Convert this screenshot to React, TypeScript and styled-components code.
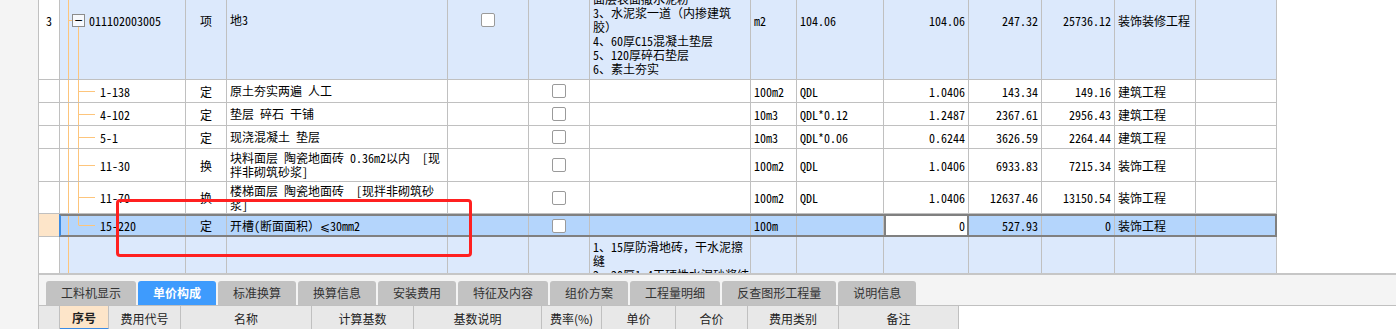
import React from "react";
import styled, { createGlobalStyle } from "styled-components";

const GlobalStyle = createGlobalStyle`
  body {
    margin: 0;
    background: #ffffff;
    font-family: "Noto Sans CJK SC", sans-serif;
  }
`;

const TREE = "#fdc57c";
const GRID_LINE = "#c0c0c0";
const CELL_FONT = `"Noto Sans Mono CJK SC", "Noto Sans CJK SC", "Liberation Mono", monospace`;

// widths of the grid columns after the row number column
const COLS = [126, 41, 221, 81, 61, 161, 46, 87, 85, 73, 73, 81, 81];

type RowKind = "item" | "child" | "selected";
type TreeKind = "item" | "child" | "last" | "plain";

interface RowData {
  height: number;
  kind: RowKind;
  tree: TreeKind;
  num?: string;
  code?: string;
  type?: string;
  name?: string[];
  check?: 5 | 6;
  desc?: string[];
  descTop?: boolean;
  unit?: string;
  expr?: string;
  qty?: string;
  price?: string;
  total?: string;
  major?: string;
}

const rows: RowData[] = [
  {
    height: 119,
    kind: "item",
    tree: "item",
    num: "3",
    code: "011102003005",
    type: "项",
    name: ["地3"],
    check: 5,
    desc: [
      "1、8-10厚地砖铺实拍平，",
      "2、20厚1:4干硬性水泥砂浆，",
      "面层表面撒水泥粉",
      "3、水泥浆一道（内掺建筑",
      "胶）",
      "4、60厚C15混凝土垫层",
      "5、120厚碎石垫层",
      "6、素土夯实",
    ],
    unit: "m2",
    expr: "104.06",
    qty: "104.06",
    price: "247.32",
    total: "25736.12",
    major: "装饰装修工程",
  },
  { height: 23, kind: "child", tree: "child", code: "1-138", type: "定", name: ["原土夯实两遍 人工"], check: 6, unit: "100m2", expr: "QDL", qty: "1.0406", price: "143.34", total: "149.16", major: "建筑工程" },
  { height: 23, kind: "child", tree: "child", code: "4-102", type: "定", name: ["垫层 碎石 干铺"], check: 6, unit: "10m3", expr: "QDL*0.12", qty: "1.2487", price: "2367.61", total: "2956.43", major: "建筑工程" },
  { height: 23, kind: "child", tree: "child", code: "5-1", type: "定", name: ["现浇混凝土 垫层"], check: 6, unit: "10m3", expr: "QDL*0.06", qty: "0.6244", price: "3626.59", total: "2264.44", major: "建筑工程" },
  { height: 33, kind: "child", tree: "child", code: "11-30", type: "换", name: ["块料面层 陶瓷地面砖 0.36m2以内  [现", "拌非砌筑砂浆]"], check: 6, unit: "100m2", expr: "QDL", qty: "1.0406", price: "6933.83", total: "7215.34", major: "装饰工程" },
  { height: 32, kind: "child", tree: "child", code: "11-70", type: "换", name: ["楼梯面层 陶瓷地面砖  [现拌非砌筑砂", "浆]"], check: 6, unit: "100m2", expr: "QDL", qty: "1.0406", price: "12637.46", total: "13150.54", major: "装饰工程" },
  { height: 23, kind: "selected", tree: "last", code: "15-220", type: "定", name: ["开槽(断面面积）⩽30mm2"], check: 6, unit: "100m", expr: "", qty: "0", price: "527.93", total: "0", major: "装饰工程" },
  {
    height: 130,
    kind: "item",
    tree: "plain",
    desc: ["1、15厚防滑地砖，干水泥擦", "缝", "2、20厚1:4干硬性水泥砂浆结"],
    descTop: true,
  },
];

const tabs = ["工料机显示", "单价构成", "标准换算", "换算信息", "安装费用", "特征及内容", "组价方案", "工程量明细", "反查图形工程量", "说明信息"];

const headCols: { label: string; w: number }[] = [
  { label: "序号", w: 49 },
  { label: "费用代号", w: 72 },
  { label: "名称", w: 131 },
  { label: "计算基数", w: 102 },
  { label: "基数说明", w: 128 },
  { label: "费率(%)", w: 60 },
  { label: "单价", w: 74 },
  { label: "合价", w: 72 },
  { label: "费用类别", w: 91 },
  { label: "备注", w: 120 },
];

const rowBg = (kind: RowKind) => (kind === "item" ? "#dce9fc" : kind === "selected" ? "#b4d5fc" : "#ffffff");

const line = (pos: string, size: string) => `linear-gradient(${TREE}, ${TREE}) ${pos} / ${size} no-repeat`;

const treeBg = (tree: TreeKind) => {
  const main = line("8px 0", "1px 100%");
  if (tree === "item") return [main, line("8px 50%", "4px 1px"), line("18px 100%", "1px calc(50% - 6px)")].join(", ");
  if (tree === "child") return [main, line("18px 0", "1px 100%"), line("19px 50%", "16px 1px")].join(", ");
  if (tree === "last") return [main, line("18px 0", "1px 50%"), line("19px 50%", "16px 1px")].join(", ");
  return main;
};

function Checkbox() {
  return <StCheck />;
}

function GridRow({ row }: { row: RowData }) {
  const cells: React.ReactNode[] = [
    <StCode key="code" $tree={row.tree} $pad={row.tree === "item" ? 12 : 40}>
      {row.tree === "item" && <StToggle>−</StToggle>}
      {row.code}
    </StCode>,
    <StCell key="type" $align="center">{row.type}</StCell>,
    <StCell key="name">
      <StLines>
        {row.name?.map((n) => (
          <StLine key={n}>{n}</StLine>
        ))}
      </StLines>
    </StCell>,
    <StCell key="c5" $align="center">{row.check === 5 && <Checkbox />}</StCell>,
    <StCell key="c6" $align="center">{row.check === 6 && <Checkbox />}</StCell>,
    <StCell key="desc" $top={row.descTop}>
      <StLines>
        {row.desc?.map((d) => (
          <StLine key={d}>{d}</StLine>
        ))}
      </StLines>
    </StCell>,
    <StCell key="unit">{row.unit}</StCell>,
    <StCell key="expr">{row.expr}</StCell>,
    row.kind === "selected" ? (
      <StEditCell key="qty">{row.qty}</StEditCell>
    ) : (
      <StCell key="qty" $align="right">{row.qty}</StCell>
    ),
    <StCell key="price" $align="right">{row.price}</StCell>,
    <StCell key="total" $align="right">{row.total}</StCell>,
    <StCell key="major">{row.major}</StCell>,
    <StCell key="remark" />,
  ];
  return (
    <StRow $h={row.height}>
      <StNumCell $selected={row.kind === "selected"}>{row.num}</StNumCell>
      <StRowBody $kind={row.kind}>{cells}</StRowBody>
    </StRow>
  );
}

export default function App() {
  return (
    <>
      <GlobalStyle />
      <StPage>
        <StSidebar />
        <StMain>
          <StGridArea>
            <StGrid>
              {rows.map((r, i) => (
                <GridRow key={i} row={r} />
              ))}
            </StGrid>
          </StGridArea>
          <StTabStrip>
            {tabs.map((t) => (
              <StTab key={t} $active={t === "单价构成"}>
                {t}
              </StTab>
            ))}
          </StTabStrip>
          <StHeader>
            <StHeadCell $w={21} />
            {headCols.map((c) => (
              <StHeadCell key={c.label} $w={c.w} $active={c.label === "序号"}>
                {c.label}
              </StHeadCell>
            ))}
          </StHeader>
        </StMain>
        <StMarker />
      </StPage>
    </>
  );
}

const StPage = styled.div`
  position: relative;
  display: flex;
  width: 1396px;
  height: 329px;
  overflow: hidden;
  background: #ffffff;
`;

const StSidebar = styled.div`
  flex: none;
  width: 38px;
  background: #f4f4f4;
  border-right: 1px solid ${GRID_LINE};
`;

const StMain = styled.div`
  flex: 1;
  display: flex;
  flex-direction: column;
  min-width: 0;
`;

const StGridArea = styled.div`
  flex: none;
  height: 273px;
  overflow: hidden;
`;

const StGrid = styled.div`
  margin-top: -39px;
  display: flex;
  flex-direction: column;
  width: ${21 + COLS.reduce((a, b) => a + b, 0)}px;
`;

const StRow = styled.div<{ $h: number }>`
  display: flex;
  height: ${(p) => p.$h}px;
  flex: none;
`;

const StNumCell = styled.div<{ $selected?: boolean }>`
  box-sizing: border-box;
  flex: none;
  width: 21px;
  display: flex;
  align-items: center;
  justify-content: center;
  font-family: ${CELL_FONT};
  font-size: 12px;
  color: #000;
  background: ${(p) => (p.$selected ? "#fde5c9" : "#ffffff")};
  border-right: 1px solid ${GRID_LINE};
  border-bottom: 1px solid ${GRID_LINE};
`;

const StRowBody = styled.div<{ $kind: RowKind }>`
  position: relative;
  flex: 1;
  display: grid;
  grid-template-columns: ${COLS.map((c) => `${c}px`).join(" ")};
  background: ${(p) => rowBg(p.$kind)};

  & > * {
    border-bottom: ${(p) => (p.$kind === "selected" ? "none" : `1px solid ${GRID_LINE}`)};
  }

  &::after {
    content: "";
    display: ${(p) => (p.$kind === "selected" ? "block" : "none")};
    position: absolute;
    inset: 0 0 0 -1px;
    border: 2px solid #808080;
    border-left-color: #3b8be4;
    pointer-events: none;
  }
`;

const StCell = styled.div<{ $align?: "left" | "center" | "right"; $top?: boolean }>`
  box-sizing: border-box;
  display: flex;
  align-items: ${(p) => (p.$top ? "flex-start" : "center")};
  justify-content: ${(p) => (p.$align === "center" ? "center" : p.$align === "right" ? "flex-end" : "flex-start")};
  padding: ${(p) => (p.$top ? "3px 3px 0" : "0 3px")};
  border-right: 1px solid ${GRID_LINE};
  font-family: ${CELL_FONT};
  font-size: 12px;
  color: #000;
  white-space: pre;
  overflow: hidden;
  min-width: 0;
`;

const StCode = styled(StCell)<{ $tree: TreeKind; $pad: number }>`
  padding-left: ${(p) => p.$pad}px;
  gap: 4px;
  background: ${(p) => treeBg(p.$tree)};
`;

const StEditCell = styled(StCell)`
  justify-content: flex-end;
  background: #ffffff;
  border: 2px solid #808080;
  padding-right: 2px;
`;

const StToggle = styled.span`
  box-sizing: border-box;
  flex: none;
  width: 13px;
  height: 13px;
  display: flex;
  align-items: center;
  justify-content: center;
  border: 1px solid #8c8c8c;
  background: #f7f9fd;
  font-family: "DejaVu Sans", sans-serif;
  font-size: 11px;
  line-height: 1;
  color: #000;
`;

const StLines = styled.div`
  display: flex;
  flex-direction: column;
  line-height: 14px;
`;

const StLine = styled.span`
  white-space: pre;
`;

const StCheck = styled.span`
  box-sizing: border-box;
  width: 14px;
  height: 14px;
  border: 1px solid #9a9a9a;
  border-radius: 2px;
  background: #ffffff;
`;

const StTabStrip = styled.div`
  flex: none;
  height: 30px;
  display: flex;
  align-items: flex-end;
  gap: 2px;
  padding-left: 7px;
  background: #f4f4f4;
  border-top: 2px solid #c6c6c6;
  border-bottom: 1px solid ${GRID_LINE};
`;

const StTab = styled.div<{ $active?: boolean }>`
  height: 24px;
  padding: 0 15px;
  border-radius: 3px 3px 0 0;
  background: ${(p) => (p.$active ? "#3e9bfd" : "#c2c2c2")};
  color: ${(p) => (p.$active ? "#ffffff" : "#333333")};
  font-family: "Noto Sans CJK SC", sans-serif;
  font-size: 12px;
  font-weight: ${(p) => (p.$active ? 700 : 400)};
  line-height: 24px;
  white-space: nowrap;
`;

const StHeader = styled.div`
  flex: none;
  height: 24px;
  display: flex;
`;

const StHeadCell = styled.div<{ $w: number; $active?: boolean }>`
  box-sizing: border-box;
  flex: none;
  width: ${(p) => p.$w}px;
  display: flex;
  align-items: center;
  justify-content: center;
  background: ${(p) => (p.$active ? "#fde5c9" : "#e8e8e8")};
  border-right: 1px solid ${GRID_LINE};
  border-bottom: ${(p) => (p.$active ? "2px solid #3b8be4" : "none")};
  font-family: "Noto Sans CJK SC", sans-serif;
  font-size: 12px;
  font-weight: ${(p) => (p.$active ? 700 : 400)};
  color: #222222;
  white-space: nowrap;
`;

const StMarker = styled.div`
  position: absolute;
  left: 116px;
  top: 199px;
  width: 356px;
  height: 58px;
  box-sizing: border-box;
  border: 3px solid #ff2020;
  border-radius: 4px;
  pointer-events: none;
`;
